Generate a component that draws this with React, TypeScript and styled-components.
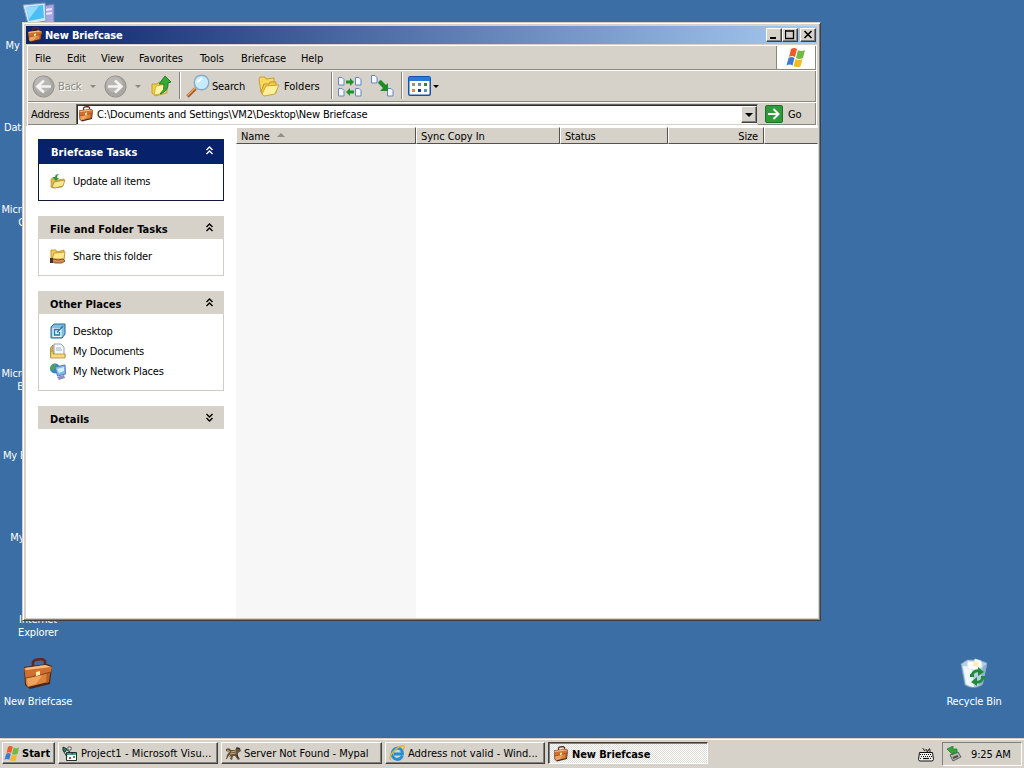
import React from "react";
import styled, { createGlobalStyle, css } from "styled-components";

const face = "#d6d2ca";
const navy = "#0a246a";

const GlobalStyle = createGlobalStyle`
  * { box-sizing: border-box; }
  html, body { margin: 0; padding: 0; overflow: hidden; }
  body {
    font-family: "DejaVu Sans Condensed", "DejaVu Sans", sans-serif;
    font-stretch: condensed;
    font-size: 11px;
    line-height: 13px;
    color: #000;
  }
  svg { display: block; flex: none; }
`;

const Screen = styled.div`
  width: 1024px;
  height: 768px;
  display: flex;
  flex-direction: column;
  overflow: hidden;
`;

const Desktop = styled.main`
  position: relative;
  flex: 1;
  background: #3b6ea5;
  overflow: hidden;
`;

const Text = styled.span<{ $track?: number; $bold?: boolean }>`
  letter-spacing: ${(p) => p.$track ?? -0.16}px;
  font-weight: ${(p) => (p.$bold ? 700 : 400)};
  white-space: nowrap;
`;

/* ---------- desktop ---------- */

const Shortcut = styled.div<{ $x: number; $y: number }>`
  position: absolute;
  left: ${(p) => p.$x}px;
  top: ${(p) => p.$y}px;
  width: 76px;
  display: flex;
  flex-direction: column;
  align-items: center;
  gap: 5px;
  color: #fff;
  text-align: center;
`;

const ShortcutIcon = styled.div`
  height: 32px;
  width: 32px;
`;

const ShortcutName = styled(Text)`
  white-space: pre;
`;

/* ---------- window ---------- */

const Window = styled.section`
  position: absolute;
  left: 22px;
  top: 22px;
  width: 799px;
  height: 599px;
  display: flex;
  flex-direction: column;
  background: ${face};
  border: 1px solid;
  border-color: #d4d0c8 #404040 #404040 #d4d0c8;
  box-shadow: inset 1px 1px #fff, inset -1px -1px #808080;
  padding: 3px 2px 2px 3px;
`;

const TitleBar = styled.header`
  height: 18px;
  margin-right: 1px;
  display: flex;
  align-items: center;
  padding: 0 1px 0 1px;
  gap: 2px;
  color: #fff;
  background: linear-gradient(90deg, ${navy}, #a6caf0);
`;

const TitleButtons = styled.div`
  margin-left: auto;
  display: flex;
`;

const CaptionButton = styled.button<{ $gap?: boolean }>`
  width: 16px;
  height: 14px;
  padding: 1px 2px;
  margin-left: ${(p) => (p.$gap ? 2 : 0)}px;
  border: 1px solid;
  border-color: #fff #404040 #404040 #fff;
  background: ${face};
  box-shadow: inset -1px -1px #808080;
`;

const Bars = styled.div`
  height: 81px;
  margin: 1px 1px 0 1px;
  display: flex;
  flex-direction: column;
  border: 1px solid #fff;
`;

const Bar = styled.div<{ $h: number; $last?: boolean }>`
  height: ${(p) => p.$h}px;
  display: flex;
  align-items: center;
  border-right: 1px solid #8a867e;
  border-bottom: 1px solid #8a867e;
  ${(p) =>
    !p.$last &&
    css`
      box-shadow: 0 1px #fff;
      margin-bottom: 1px;
    `}
`;

const MenuItem = styled.div<{ $w: number }>`
  width: ${(p) => p.$w}px;
  padding: 2px 0 0 7px;
`;

const Brand = styled.div`
  margin-left: auto;
  width: 39px;
  align-self: stretch;
  background: #fff;
  border-left: 1px solid #8a867e;
  display: flex;
  align-items: center;
  justify-content: center;
`;

const Tool = styled.div<{ $w: number; $gap?: number; $off?: boolean; $inset?: number }>`
  width: ${(p) => p.$w}px;
  padding: 1px 0 0 ${(p) => p.$inset ?? 0}px;
  display: flex;
  align-items: center;
  gap: ${(p) => p.$gap ?? 4}px;
  color: ${(p) => (p.$off ? "#8b8882" : "#000")};
  text-shadow: ${(p) => (p.$off ? "1px 1px #fff" : "none")};
`;

const ToolName = styled(Text)<{ $w: number }>`
  width: ${(p) => p.$w}px;
`;

const Divider = styled.div<{ $after: number }>`
  width: 2px;
  height: 27px;
  flex: none;
  background: linear-gradient(90deg, #88857e 50%, #fff 50%);
  margin-right: ${(p) => p.$after}px;
`;

const Arrow = styled.i<{ $off?: boolean; $size?: number }>`
  width: 0;
  height: 0;
  flex: none;
  border: ${(p) => p.$size ?? 3}px solid transparent;
  border-bottom: 0;
  border-top-color: ${(p) => (p.$off ? "#8b8882" : "#000")};
`;

const AddressLabel = styled.div`
  width: 43px;
  padding: 2px 0 0 3px;
`;

const AddressBox = styled.div`
  width: 682px;
  height: 21px;
  margin: 1px 0 0 5px;
  display: flex;
  align-items: center;
  gap: 3px;
  padding-left: 1px;
  background: #fff;
  border: 1px solid;
  border-color: #66635e #d4d0c8 #d4d0c8 #66635e;
  box-shadow: inset 1px 1px #303030;
`;

const DropButton = styled.button`
  width: 16px;
  height: 17px;
  margin: 1px 0 0 auto;
  padding: 0;
  display: flex;
  align-items: center;
  justify-content: center;
  border: 1px solid;
  border-color: #fff #404040 #404040 #fff;
  box-shadow: inset -1px -1px #808080;
  background: ${face};
`;

const Go = styled.div`
  display: flex;
  align-items: center;
  gap: 5px;
  margin-left: 7px;
  padding-top: 1px;
`;

const Content = styled.div`
  flex: 1;
  display: flex;
  background: #fff;
  min-height: 0;
`;

/* ---------- task pane ---------- */

const TaskPane = styled.aside`
  width: 210px;
  padding: 13px 12px 0;
  display: flex;
  flex-direction: column;
  gap: 15px;
`;

const Card = styled.section<{ $main?: boolean; $h: number }>`
  height: ${(p) => p.$h}px;
  border: 1px solid ${(p) => (p.$main ? "#10183c" : "#d0ccc6")};
`;

const CardHead = styled.header<{ $main?: boolean }>`
  height: ${(p) => (p.$main ? 25 : 23)}px;
  margin: -1px -1px 0;
  padding: ${(p) => (p.$main ? "1px 10px 0 13px" : "3px 10px 0 12px")};
  display: flex;
  align-items: center;
  justify-content: space-between;
  color: ${(p) => (p.$main ? "#fff" : "#000")};
  background: ${(p) => (p.$main ? "#08216b" : face)};

  svg { margin-top: -3px; }
`;

const CardTitle = styled(Text).attrs({ $bold: true, $track: 0.04 })``;

const CardBody = styled.div`
  padding: 8px 0 0 11px;
`;

const Task = styled.div`
  height: 20px;
  display: flex;
  align-items: center;
  gap: 7px;
  padding-bottom: 2px;
`;

/* ---------- file list ---------- */

const List = styled.div`
  flex: 1;
  display: flex;
  flex-direction: column;
  padding-top: 1px;
`;

const ListHead = styled.div`
  display: flex;
  height: 17px;
`;

const HeadCell = styled.div<{ $w?: number; $right?: boolean }>`
  ${(p) => (p.$w ? `width: ${p.$w}px;` : "flex: 1;")}
  display: flex;
  align-items: center;
  gap: 7px;
  padding: ${(p) => (p.$right ? "1px 5px 0 0" : "1px 5px 0 4px")};
  justify-content: ${(p) => (p.$right ? "flex-end" : "flex-start")};
  background: ${face};
  border: 1px solid;
  border-color: #fff ${(p) => (p.$w ? "#55524d" : face)} #55524d #fff;
`;

const SortMark = styled.i`
  border: 4px solid transparent;
  border-top: 0;
  border-bottom-color: #918e87;
  margin-bottom: 2px;
`;

const SortedColumn = styled.div`
  flex: 1;
  width: 180px;
  background: #f7f7f7;
`;

/* ---------- taskbar ---------- */

const Taskbar = styled.footer`
  height: 30px;
  display: flex;
  align-items: flex-start;
  padding: 4px 2px 0 2px;
  background: ${face};
  box-shadow: inset 0 1px #d4d0c8, inset 0 2px #fff;
`;

const TaskButton = styled.button<{ $w: number; $after: number; $down?: boolean }>`
  width: ${(p) => p.$w}px;
  height: 22px;
  margin-right: ${(p) => p.$after}px;
  padding: ${(p) => (p.$down ? "2px 3px 0 4px" : "0 3px")};
  display: flex;
  align-items: center;
  gap: 3px;
  font: inherit;
  color: #000;
  overflow: hidden;
  border: 1px solid;
  ${(p) =>
    p.$down
      ? css`
          border-color: #404040 #fff #fff #404040;
          box-shadow: inset 1px 1px #808080;
          background: repeating-conic-gradient(#fff 0 25%, #dedbd5 0 50%) 0 0 / 2px 2px;
        `
      : css`
          border-color: #fff #404040 #404040 #fff;
          box-shadow: inset -1px -1px #808080;
          background: ${face};
        `}
`;

const StartButton = styled(TaskButton)`
  padding: 0 1px;
  gap: 2px;
`;

const Keyboard = styled.div`
  margin: 5px 8px 0 auto;
`;

const Tray = styled.div`
  width: 80px;
  height: 24px;
  display: flex;
  align-items: center;
  gap: 9px;
  padding: 0 0 0 3px;
  border: 1px solid;
  border-color: #808080 #fff #fff #808080;
`;

/* ---------- icons ---------- */

const BriefcaseIcon = ({ size = 16 }: { size?: number }) => (
  <svg width={size} height={size} viewBox="0 0 32 32">
    <path d="M11 8V4l2-2 7-1 3 2v4" fill="none" stroke="#5e2a1c" strokeWidth="2.600" />
    <path d="m2 9 23-3 5 2-2 18-20 5-5-4z" fill="#4a2518" />
    <path d="m3 10 23-1v15L6 29l-2-3z" fill="#dc8438" />
    <path d="m5 20 17-5-8 11-8 2z" fill="#f0a55e" />
    <path d="m25 9 4 0-2 15-3 1z" fill="#b5602a" />
    <path d="m2 10 22-3 6 2-1 5-11 3-14 3z" fill="#cf6f30" />
    <path d="m3 10 20-3 6 2-25 3z" fill="#f6bd84" />
    <path d="m4 20 14-3 11-3" fill="none" stroke="#8e431c" strokeWidth="1.200" />
    <path d="m14 14 4-1v4l-4 1z" fill="#fff0a8" />
  </svg>
);

const FlagIcon = ({ w, h }: { w: number; h: number }) => (
  <svg width={w} height={h} viewBox="0 0 20 19">
    <path d="M5 1q3-2 6 0L9 9Q6 7 3 9z" fill="#ef5a2a" />
    <path d="M12 2q3 2 7 0l-2 8q-4 2-7 0z" fill="#74b944" />
    <path d="M2.500 10q3-2 6 0l-2 7.500q-3-2-6 0z" fill="#3f78d0" />
    <path d="M9.500 11q3 2 7 0l-2 7.500q-4 1.500-7-.5z" fill="#f7b824" />
  </svg>
);

const RoundArrow = ({ right }: { right?: boolean }) => (
  <svg width="23" height="23" viewBox="0 0 23 23">
    <circle cx="11.5" cy="11.5" r="10.600" fill="#a9a7a3" stroke="#94918c" />
    <circle cx="10.5" cy="9.5" r="8" fill="#b9b7b3" />
    <path
      d={right ? "M4 11.500h13M11 5.500l6.500 6-6.500 6" : "M19 11.500H6M12 5.500l-6.500 6 6.500 6"}
      fill="none"
      stroke="#f4f3f1"
      strokeWidth="2.600"
    />
  </svg>
);

const UpIcon = () => (
  <svg width="22" height="22" viewBox="0 0 22 22">
    <path d="M1 9h5l2-2 8 2v9L4 21l-3-3z" fill="#efcf4b" stroke="#b8942a" strokeWidth=".8" />
    <path d="m3 20 2-9 11-2-1 9z" fill="#fff5a4" stroke="#cda638" strokeWidth=".8" />
    <path d="M9 19q5-4 4-10H8l6-8 6 6-3 1q1 8-8 11z" fill="#37a935" stroke="#187a1c" strokeWidth=".9" />
  </svg>
);

const SearchIcon = () => (
  <svg width="24" height="24" viewBox="0 0 24 24">
    <path d="m1.500 22.500 8-8" stroke="#a85c28" strokeWidth="3.400" />
    <path d="m1.500 21.500 8-8" stroke="#eda661" strokeWidth="1.500" />
    <circle cx="15.5" cy="8.5" r="7.300" fill="#c6ecfc" stroke="#84abc9" strokeWidth="1.400" />
    <path d="M10.500 9q1-5 6-5.500-1 4-6 5.500z" fill="#fff" />
  </svg>
);

const FoldersIcon = () => (
  <svg width="22" height="22" viewBox="0 0 22 22">
    <path d="M1 4 2 2h5l1 2 8-1v12L3 17z" fill="#f6d95e" stroke="#c99f2f" />
    <path d="m3 17 3-8h5l1-2h6v11L5 20z" fill="#f2cc4a" stroke="#c0942b" />
    <path d="m4 19 4-8 13-1-4 9-11 2z" fill="#fff09b" stroke="#cda334" />
  </svg>
);

const Page = ({ x, y }: { x: number; y: number }) => (
  <path d={`M${x} ${y}h3.500l2 2v5.500h-5.500z`} fill="#f1f8ff" stroke="#6a86bc" />
);

const UpdateAllIcon = () => (
  <svg width="24" height="21" viewBox="0 0 24 21">
    <Page x={0.5} y={1.5} />
    <Page x={17.5} y={1.5} />
    <Page x={0.5} y={12.5} />
    <Page x={17.5} y={12.5} />
    <path d="M8 4.500h4V2l4 4-4 4V7.500H8zM16 14.500h-4V12l-4 4 4 4v-2.500h4z" fill="#21902a" />
  </svg>
);

const UpdateOneIcon = () => (
  <svg width="23" height="22" viewBox="0 0 23 22">
    <Page x={0.5} y={0.5} />
    <Page x={16.5} y={13.5} />
    <path d="m8 6 2-1 5 5 2-2v8H9l3-3-5-5z" fill="#1f8a26" />
  </svg>
);

const ViewsIcon = () => (
  <svg width="23" height="20" viewBox="0 0 23 20">
    <rect x=".75" y=".75" width="21.500" height="18.500" rx="1.500" fill="#fff" stroke="#1650a8" strokeWidth="1.500" />
    <path d="M1 1h21v4H1z" fill="#2e78d8" />
    <path d="M4 7h3v3H4z" fill="#8c9c78" />
    <path d="M10 7h3v3h-3zM16 13h3v3h-3z" fill="#5a91b8" />
    <path d="M16 7h3v3h-3z" fill="#348048" />
    <path d="M10 13h3v3h-3z" fill="#183880" />
    <path d="M4 13h3v3H4z" fill="#d88a48" />
  </svg>
);

const GoIcon = () => (
  <svg width="18" height="18" viewBox="0 0 18 18">
    <rect x=".5" y=".5" width="17" height="17" rx="1.500" fill="#2f9a3c" stroke="#1c7128" />
    <path d="M3 9h10M8.500 4l5 5-5 5" fill="none" stroke="#fff" strokeWidth="2" />
  </svg>
);

const Chevrons = ({ down, color = "#000" }: { down?: boolean; color?: string }) => (
  <svg width="9" height="9" viewBox="0 0 9 9">
    <path
      d={down ? "M1.500 1l3 3 3-3M1.500 5l3 3 3-3" : "M1.500 4l3-3 3 3M1.500 8l3-3 3 3"}
      fill="none"
      stroke={color}
      strokeWidth="1.400"
    />
  </svg>
);

const UpdateFolderIcon = () => (
  <svg width="16" height="16" viewBox="0 0 16 16">
    <path d="M1 14V6l4-1 2 2 7-1-2 8-9 1z" fill="#e3b84c" stroke="#b58d34" strokeWidth=".7" />
    <path d="m2 14 2-5 11-2-2 6-8 2z" fill="#fbe791" stroke="#a57b22" strokeWidth=".7" />
    <path d="m2 4 4 4 3-3H7q0-3 2-4-4 0-4 3z" fill="#2f9a38" />
  </svg>
);

const ShareFolderIcon = () => (
  <svg width="16" height="16" viewBox="0 0 16 16">
    <path d="M1 13V2h5l1 2 7-2v10z" fill="#f2cd52" stroke="#b58a25" strokeWidth=".8" />
    <path d="m2 11 2-6 11-1-1 7z" fill="#ffe88b" stroke="#b58a25" strokeWidth=".8" />
    <path d="M0 11h4l4 1 5-1 2 2-3 2H5l-2-1H0z" fill="#d98d51" stroke="#6e3a1c" strokeWidth=".8" />
    <path d="M0 10h3v5H0z" fill="#49302a" />
  </svg>
);

const DesktopIcon = () => (
  <svg width="16" height="16" viewBox="0 0 16 16">
    <path d="m1 4 3-3h11v10l-3 4H1z" fill="#7fc0e2" stroke="#256891" />
    <path d="M2.500 5h9v9h-9z" fill="#e8f8ff" />
    <path d="M9 6.500H4.500v5.500h5V9M7 9.500l6-6.500" fill="none" stroke="#2675a6" strokeWidth="1.400" />
  </svg>
);

const DocumentsIcon = () => (
  <svg width="16" height="16" viewBox="0 0 16 16">
    <path d="M.5 14V5L3 2v9h12v3z" fill="#e6b84a" stroke="#a67c25" strokeWidth=".8" />
    <path d="M4 1h7l3 3v8H4z" fill="#f5f9ff" stroke="#7588ad" strokeWidth=".8" />
    <path d="M6 5h5M6 7h6" stroke="#9eb2cf" />
    <path d="M.5 15 1 8h2v3h12v4z" fill="#f6da80" stroke="#b28a30" strokeWidth=".8" />
  </svg>
);

const NetworkIcon = () => (
  <svg width="16" height="17" viewBox="0 0 16 17">
    <circle cx="5" cy="5.500" r="5" fill="#3685cb" />
    <path d="M1 3q3-3 5-2L5 5 3 8Q0 6 1 3z" fill="#48a64c" />
    <path d="m5 4 10-2 .5 9-8 2z" fill="#78bdec" stroke="#6675af" />
    <path d="m7 6 7-2v4l-5 2z" fill="#d4f1ff" />
    <path d="m7 14 7-2 1 3-6 2z" fill="#8c8fc4" />
  </svg>
);

const ComputerIcon = () => (
  <svg width="36" height="32" viewBox="0 0 36 32">
    <path d="M21 4 32 2v27l-9 2z" fill="#aaa6e4" stroke="#7777b8" />
    <path d="m23 8 7-1M23 12l7-1" stroke="#ece9ff" strokeWidth="2" />
    <path d="m1 3 22-2 1 18-18 3z" fill="#d6e8ff" stroke="#7d94c8" />
    <path d="m4 5 17-2 1 13-15 3z" fill="#4dbdf6" />
    <path d="m4 5 13-1L7 17z" fill="#94dcff" />
  </svg>
);

const RecycleIcon = () => (
  <svg width="32" height="32" viewBox="0 0 32 32">
    <path d="m3 6 4 21q8 5 17 0l5-22-8-3H9z" fill="#b4d0e6" stroke="#7898b2" strokeWidth=".8" />
    <path d="m5 8 3 18q4 3 8 3L14 9z" fill="#eef7fb" />
    <path d="m9 10 1-7 6 1 1-3 6 2 1 6-8 3z" fill="#fff" stroke="#dce5e5" strokeWidth=".8" />
    <path d="m16 3 5 1-1 5-5-1z" fill="#f7efbd" />
    <path d="m25 8 4-2-4 20-4 2z" fill="#8fb2cc" />
    <path
      d="M14 17q2-5 7-4M25 20q-2 5-7 4"
      fill="none"
      stroke="#218b39"
      strokeWidth="2.800"
    />
    <path d="m20 9 6 5-6 4zM19 28l-6-4 6-5zM12 16h4v3h-4zM23 18h4v3h-4z" fill="#218b39" />
  </svg>
);

const ProjectIcon = () => (
  <svg width="16" height="16" viewBox="0 0 16 16">
    <path d="M4.500 7.500h10v8h-10z" fill="#fff" stroke="#20302c" />
    <path d="M5 9h9" stroke="#4f9a8c" strokeWidth="2" />
    <path d="m1 2 4 2-2 3-2-1zM5 5l6 4M2 7l3 5" fill="#397665" stroke="#173c30" />
    <path d="M6 2h3v3H6z" fill="#fff" stroke="#222" strokeWidth=".7" />
    <path d="M7 12h2v2H7z" fill="#c04040" />
    <path d="M11 11h2v2h-2z" fill="#4d9a50" />
  </svg>
);

const MypalIcon = () => (
  <svg width="16" height="16" viewBox="0 0 16 16">
    <path d="M1 4q3-2 5 1h4l2-3 3 1 1 3-3 2v3l2 3-2 1-3-4H8l-1 4-2-1 1-3-3 1-1 2H1l1-4 2-3-3-1z" fill="#66533b" />
    <path d="m2 5 3 2M6 7l5-1M5 9l6-1M3 12l2-2" stroke="#c9ae78" />
    <path d="m11 3 4 1M12 10l1 3" stroke="#2b2822" />
  </svg>
);

const IeIcon = () => (
  <svg width="16" height="16" viewBox="0 0 16 16">
    <path d="M13.500 11q-2 3.500-5.500 3.500-5-1-5-6 1-5 5.500-5.500 5 .5 5 6H5" fill="none" stroke="#268ed2" strokeWidth="2.800" />
    <path d="M2 15Q-1 12 5 6q6-6 10-5 1 1-1 4" fill="none" stroke="#e9b62c" strokeWidth="1.500" />
  </svg>
);

const KeyboardIcon = () => (
  <svg width="16" height="15" viewBox="0 0 16 15">
    <path d="M4.500 1.500q1.500 0 1.500 1.500t1.500 0 1.500 1 1.500-1 1.500 2" fill="none" stroke="#222" />
    <path d="M1.500 5.500h13l1 7-1 1.500H1.500L.5 12.500z" fill="#f4f2ee" stroke="#111" />
    <path d="M2 7.500h12M3 9.500h11M2 11.500h2M12 11.500h2" stroke="#111" strokeWidth="1.200" strokeDasharray="1 1" />
    <path d="M5 11.500h6" stroke="#111" strokeWidth="1.200" />
  </svg>
);

const EjectIcon = () => (
  <svg width="16" height="16" viewBox="0 0 16 16">
    <path d="m4 9 8-3 3 5-8 4z" fill="#b6b7b4" stroke="#5a5d59" />
    <path d="m7 12 5-2" stroke="#4a4d48" strokeWidth="2" />
    <path d="M1 3 7 0v3h4v4H7v2z" fill="#32a43a" stroke="#247428" strokeWidth=".7" />
  </svg>
);

/* ---------- data ---------- */

const shortcuts: { name: string; x: number; y: number; icon?: React.ReactNode }[] = [
  { name: "My Computer", x: 0, y: 2, icon: <ComputerIcon /> },
  { name: "Data Sources", x: -2, y: 84 },
  { name: "Microsoft Visual\nC++ 6.0", x: 1, y: 166 },
  { name: "Microsoft Visual\nBasic 6.0", x: 1, y: 330 },
  { name: "My Documents", x: 1, y: 412 },
  { name: "My Network\nPlaces", x: 1, y: 494 },
  { name: "Internet\nExplorer", x: 0, y: 576 },
  { name: "New Briefcase", x: 0, y: 658, icon: <BriefcaseIcon size={32} /> },
  { name: "Recycle Bin", x: 936, y: 658, icon: <RecycleIcon /> },
];

const menus: [string, number][] = [
  ["File", 32],
  ["Edit", 34],
  ["View", 38],
  ["Favorites", 61],
  ["Tools", 41],
  ["Briefcase", 60],
  ["Help", 40],
];

const App = () => (
  <Screen>
    <GlobalStyle />
    <Desktop>
      {shortcuts.map((s) => (
        <Shortcut key={s.name} $x={s.x} $y={s.y}>
          <ShortcutIcon>{s.icon}</ShortcutIcon>
          <ShortcutName>{s.name}</ShortcutName>
        </Shortcut>
      ))}

      <Window>
        <TitleBar>
          <BriefcaseIcon />
          <Text $bold>New Briefcase</Text>
          <TitleButtons>
            <CaptionButton>
              <svg width="10" height="10"><path d="M1 8h6" stroke="#000" strokeWidth="2" /></svg>
            </CaptionButton>
            <CaptionButton>
              <svg width="10" height="10"><path d="M0 1h9M.500 0v8.500h8V0" fill="none" stroke="#000" strokeWidth="1.300" /></svg>
            </CaptionButton>
            <CaptionButton $gap>
              <svg width="10" height="10"><path d="m1.500 1 7 7m0-7-7 7" stroke="#000" strokeWidth="1.600" /></svg>
            </CaptionButton>
          </TitleButtons>
        </TitleBar>

        <Bars>
          <Bar $h={24}>
            {menus.map(([name, w]) => (
              <MenuItem key={name} $w={w}>
                <Text $track={-0.1}>{name}</Text>
              </MenuItem>
            ))}
            <Brand>
              <FlagIcon w={20} h={19} />
            </Brand>
          </Bar>
          <Bar $h={32}>
            <Tool $w={76} $gap={3} $inset={4} $off>
              <RoundArrow />
              <ToolName $w={29}>Back</ToolName>
              <Arrow $off />
            </Tool>
            <Tool $w={47} $gap={8} $off>
              <RoundArrow right />
              <Arrow $off />
            </Tool>
            <Tool $w={28}>
              <UpIcon />
            </Tool>
            <Divider $after={5} />
            <Tool $w={72} $gap={2}>
              <SearchIcon />
              <Text>Search</Text>
            </Tool>
            <Tool $w={73} $gap={4}>
              <FoldersIcon />
              <Text $track={0}>Folders</Text>
            </Tool>
            <Divider $after={5} />
            <Tool $w={33}>
              <UpdateAllIcon />
            </Tool>
            <Tool $w={30}>
              <UpdateOneIcon />
            </Tool>
            <Divider $after={5} />
            <Tool $w={40} $gap={2}>
              <ViewsIcon />
              <Arrow />
            </Tool>
          </Bar>
          <Bar $h={22} $last>
            <AddressLabel>
              <Text>Address</Text>
            </AddressLabel>
            <AddressBox>
              <BriefcaseIcon />
              <Text>C:\Documents and Settings\VM2\Desktop\New Briefcase</Text>
              <DropButton>
                <Arrow $size={4} />
              </DropButton>
            </AddressBox>
            <Go>
              <GoIcon />
              <Text>Go</Text>
            </Go>
          </Bar>
        </Bars>

        <Content>
          <TaskPane>
            <Card $main $h={62}>
              <CardHead $main>
                <CardTitle>Briefcase Tasks</CardTitle>
                <Chevrons color="#fff" />
              </CardHead>
              <CardBody>
                <Task>
                  <UpdateFolderIcon />
                  <Text $track={-0.25}>Update all items</Text>
                </Task>
              </CardBody>
            </Card>
            <Card $h={60}>
              <CardHead>
                <CardTitle>File and Folder Tasks</CardTitle>
                <Chevrons />
              </CardHead>
              <CardBody>
                <Task>
                  <ShareFolderIcon />
                  <Text>Share this folder</Text>
                </Task>
              </CardBody>
            </Card>
            <Card $h={100}>
              <CardHead>
                <CardTitle>Other Places</CardTitle>
                <Chevrons />
              </CardHead>
              <CardBody>
                <Task>
                  <DesktopIcon />
                  <Text>Desktop</Text>
                </Task>
                <Task>
                  <DocumentsIcon />
                  <Text $track={-0.25}>My Documents</Text>
                </Task>
                <Task>
                  <NetworkIcon />
                  <Text>My Network Places</Text>
                </Task>
              </CardBody>
            </Card>
            <Card $h={23}>
              <CardHead>
                <CardTitle>Details</CardTitle>
                <Chevrons down />
              </CardHead>
            </Card>
          </TaskPane>
          <List>
            <ListHead>
              <HeadCell $w={180}>
                <Text>Name</Text>
                <SortMark />
              </HeadCell>
              <HeadCell $w={144}>
                <Text $track={-0.05}>Sync Copy In</Text>
              </HeadCell>
              <HeadCell $w={108}>
                <Text>Status</Text>
              </HeadCell>
              <HeadCell $w={96} $right>
                <Text>Size</Text>
              </HeadCell>
              <HeadCell />
            </ListHead>
            <SortedColumn />
          </List>
        </Content>
      </Window>
    </Desktop>

    <Taskbar>
      <StartButton $w={53} $after={3}>
        <FlagIcon w={16} h={15} />
        <Text $bold $track={0}>Start</Text>
      </StartButton>
      <TaskButton $w={160} $after={3}>
        <ProjectIcon />
        <Text $track={0.08}>Project1 - Microsoft Visu...</Text>
      </TaskButton>
      <TaskButton $w={161} $after={3}>
        <MypalIcon />
        <Text $track={-0.05}>Server Not Found - Mypal</Text>
      </TaskButton>
      <TaskButton $w={160} $after={3}>
        <IeIcon />
        <Text $track={0}>Address not valid - Wind...</Text>
      </TaskButton>
      <TaskButton $w={160} $after={0} $down>
        <BriefcaseIcon />
        <Text $bold $track={-0.1}>New Briefcase</Text>
      </TaskButton>
      <Keyboard>
        <KeyboardIcon />
      </Keyboard>
      <Tray>
        <EjectIcon />
        <Text>9:25 AM</Text>
      </Tray>
    </Taskbar>
  </Screen>
);

export default App;
